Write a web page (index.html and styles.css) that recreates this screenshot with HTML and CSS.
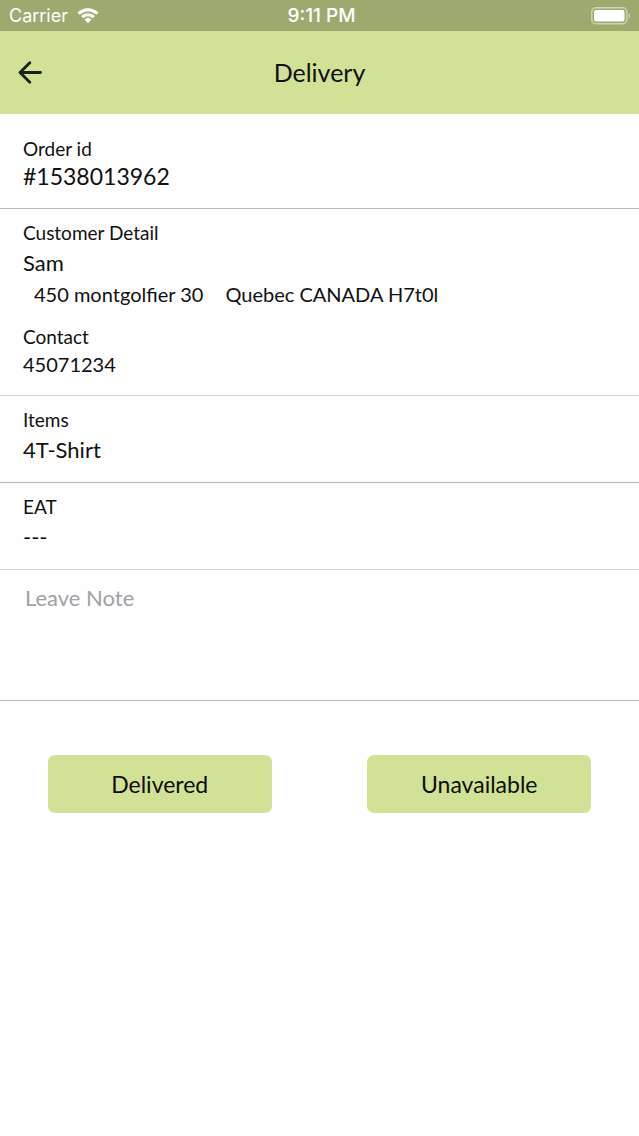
FILE: index.html
```
<!DOCTYPE html>
<html lang="en">

<head>
    <meta charset="UTF-8">
    <meta name="viewport" content="width=device-width, initial-scale=1.0">
    <title>Delivery</title>
    <link rel="stylesheet" href="styles.css">
</head>

<body>
    <div class="status_bar">
        <div class="carrier">
            <span>Carrier</span>
            <svg width="22" height="16" viewBox="0 0 22 16" fill="#fff">
                <path d="M11 0.3C6.9 0.3 3.2 1.9 0.4 4.5L2.6 6.7C4.8 4.7 7.7 3.4 11 3.4S17.2 4.7 19.4 6.7L21.6 4.5C18.8 1.9 15.1 0.3 11 0.3Z" />
                <path d="M11 5.3C8.3 5.3 5.9 6.3 4.1 8.1L6.3 10.3C7.5 9.1 9.2 8.3 11 8.3S14.5 9.1 15.7 10.3L17.9 8.1C16.1 6.3 13.7 5.3 11 5.3Z" />
                <path d="M11 10.1C9.6 10.1 8.4 10.7 7.6 11.6L11 15.3L14.4 11.6C13.6 10.7 12.4 10.1 11 10.1Z" />
            </svg>
        </div>
        <span class="time">9:11 PM</span>
        <div class="battery">
            <svg width="40" height="18" viewBox="0 0 40 18">
                <rect x="0.8" y="0.8" width="35" height="16" rx="4" fill="none" stroke="#ced6b4" stroke-width="1.4" />
                <rect x="3" y="3" width="30.5" height="11.5" rx="2" fill="#fff" />
                <path d="M37.6 6.2C39.6 7 39.6 10.8 37.6 11.6Z" fill="#ced6b4" />
            </svg>
        </div>
    </div>

    <header class="header">
        <button type="button" class="back" aria-label="Back">
            <svg width="24" height="24" viewBox="0 0 24 24" fill="none" stroke="#1c2118" stroke-width="2.8" stroke-linecap="round" stroke-linejoin="round">
                <path d="M22.5 12.5H2M11.8 2.7L2 12.5L11.8 22.3" />
            </svg>
        </button>
        <h1>Delivery</h1>
    </header>

    <main>
        <section class="block order">
            <h2>Order id</h2>
            <p class="order_id">#1538013962</p>
        </section>

        <section class="block light">
            <h2>Customer Detail</h2>
            <p class="value">Sam</p>
            <p class="address"><span>450 montgolfier 30</span><span>Quebec CANADA H7t0l</span></p>
            <h2>Contact</h2>
            <p class="phone">45071234</p>
        </section>

        <section class="block">
            <h2>Items</h2>
            <p class="value">4T-Shirt</p>
        </section>

        <section class="block light">
            <h2>EAT</h2>
            <p class="value">---</p>
        </section>

        <form class="note_form">
            <textarea class="note" placeholder="Leave Note" aria-label="Leave Note"></textarea>
            <div class="actions">
                <button type="button" class="btn">Delivered</button>
                <button type="button" class="btn">Unavailable</button>
            </div>
        </form>
    </main>
</body>

</html>
```

FILE: styles.css
```
* {
    margin: 0;
    padding: 0;
    box-sizing: border-box;
}

body {
    min-height: 100vh;
    background-color: #fefefe;
    color: #111;
    font-family: Lato, sans-serif;
}

.status_bar {
    display: grid;
    grid-template-columns: 1fr auto 1fr;
    align-items: center;
    padding: 0 8px 0 9px;
    background-color: #9caa6f;
    color: #fff;
    font-family: Inter, sans-serif;
    font-size: 18px;
    line-height: 31px;
}

.carrier {
    display: flex;
    align-items: center;
    gap: 9px;
}

.time {
    padding-left: 3px;
    font-size: 19px;
    font-weight: 500;
}

.battery {
    display: flex;
    justify-content: flex-end;
}

/* Header */
.header {
    display: grid;
    grid-template-columns: 1fr auto 1fr;
    align-items: center;
    padding: 24px 18px 25px;
    background-color: #d1e196;
}

.header h1 {
    font-size: 25px;
    font-weight: 400;
    line-height: 34px;
}

.back {
    display: flex;
    justify-self: start;
    border: none;
    background: none;
    cursor: pointer;
}

/* Detail blocks */
.block {
    padding: 12px 23px 16px;
    border-bottom: 1px solid #b8b8b8;
}

.light {
    border-bottom-color: #d6d6d6;
}

.order {
    padding-top: 23px;
    padding-bottom: 17px;
}

.block h2 {
    font-size: 19px;
    font-weight: 400;
    line-height: 24px;
}

.order_id {
    font-size: 23px;
    line-height: 30px;
}

.value {
    margin: 4px 0 2px;
    font-size: 22px;
    line-height: 28px;
}

.address {
    display: flex;
    flex-wrap: wrap;
    column-gap: 22px;
    padding-left: 11px;
    margin-bottom: 16px;
    font-size: 20px;
    line-height: 30px;
}

.phone {
    font-size: 20px;
    line-height: 30px;
}

/* Note */
.note {
    display: block;
    width: 100%;
    height: 131px;
    padding: 14px 25px;
    border: none;
    border-bottom: 1px solid #b8b8b8;
    background: none;
    color: #111;
    font-family: inherit;
    font-size: 22px;
    line-height: 28px;
    outline: none;
    resize: none;
}

.note::placeholder {
    color: #a3a0a5;
}

.actions {
    display: flex;
    justify-content: space-around;
    padding: 54px 0;
}

.btn {
    width: 35%;
    padding: 14px 0;
    border: none;
    border-radius: 7px;
    background-color: #d1e196;
    color: #0c0f06;
    font-family: inherit;
    font-size: 23px;
    line-height: 30px;
    cursor: pointer;
}
```
